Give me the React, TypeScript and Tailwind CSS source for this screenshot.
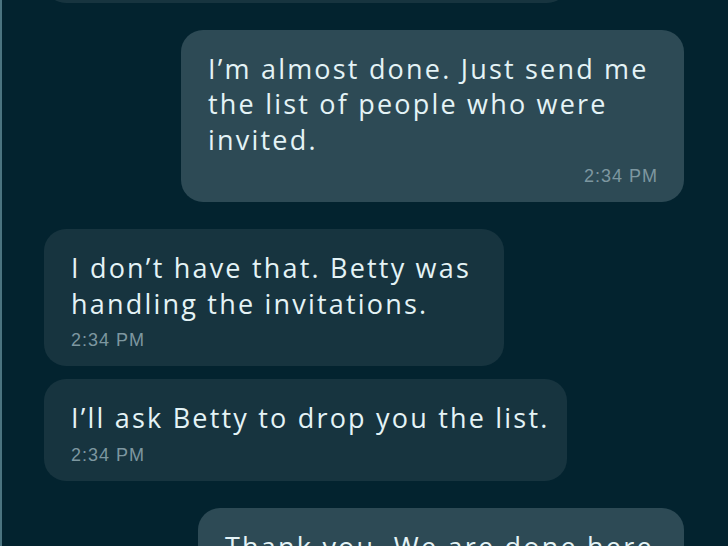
const font = { fontFamily: '"Open Sans", Lato, sans-serif' };

type Msg = {
  lines: string[];
  time: string;
  mine: boolean;
  width: string;
};

const messages: Msg[] = [
  { lines: ['See you at the office tomorrow.'], time: '2:33 PM', mine: false, width: 'w-[525px]' },
  {
    lines: ['I’m almost done. Just send me', 'the list of people who were', 'invited.'],
    time: '2:34 PM',
    mine: true,
    width: 'w-[503px]',
  },
  {
    lines: ['I don’t have that. Betty was', 'handling the invitations.'],
    time: '2:34 PM',
    mine: false,
    width: 'w-[460px]',
  },
  { lines: ['I’ll ask Betty to drop you the list.'], time: '2:34 PM', mine: false, width: 'w-[523px]' },
  { lines: ['Thank you. We are done here.'], time: '2:35 PM', mine: true, width: 'w-[486px]' },
];

function Bubble({ msg }: { msg: Msg }) {
  return (
    <div
      className={`${msg.width} rounded-[22px] pt-[21px] pb-[16px] pl-[27px] pr-[26px] ${
        msg.mine ? 'self-end bg-[#2d4a55]' : 'self-start bg-[#17343f]'
      }`}
    >
      <div className="text-[27px] leading-[35.5px] tracking-[2.2px] text-[#e4f3f6]" style={font}>
        {msg.lines.map((l, i) => (
          <div key={i} className="whitespace-nowrap">
            {l}
          </div>
        ))}
      </div>
      <div
        className={`mt-[9px] text-[18px] leading-[20px] tracking-[1px] text-[#7d97a0] ${
          msg.mine ? 'text-right' : 'text-left'
        }`}
        style={{ fontFamily: '"Liberation Sans", Arial, sans-serif' }}
      >
        {msg.time}
      </div>
    </div>
  );
}

export default function App() {
  return (
    <div className="h-[546px] w-[728px] overflow-hidden bg-[#03232f] border-l-2 border-[#4b7480]">
      <div className="flex flex-col pl-[42px] pr-[44px] mt-[-99px]">
        {messages.map((m, i) => {
          const prev = messages[i - 1];
          const gap = i === 0 ? '' : prev.mine === m.mine ? 'mt-[13px]' : 'mt-[27px]';
          return (
            <div key={i} className={`flex flex-col ${gap}`}>
              <Bubble msg={m} />
            </div>
          );
        })}
      </div>
    </div>
  );
}
